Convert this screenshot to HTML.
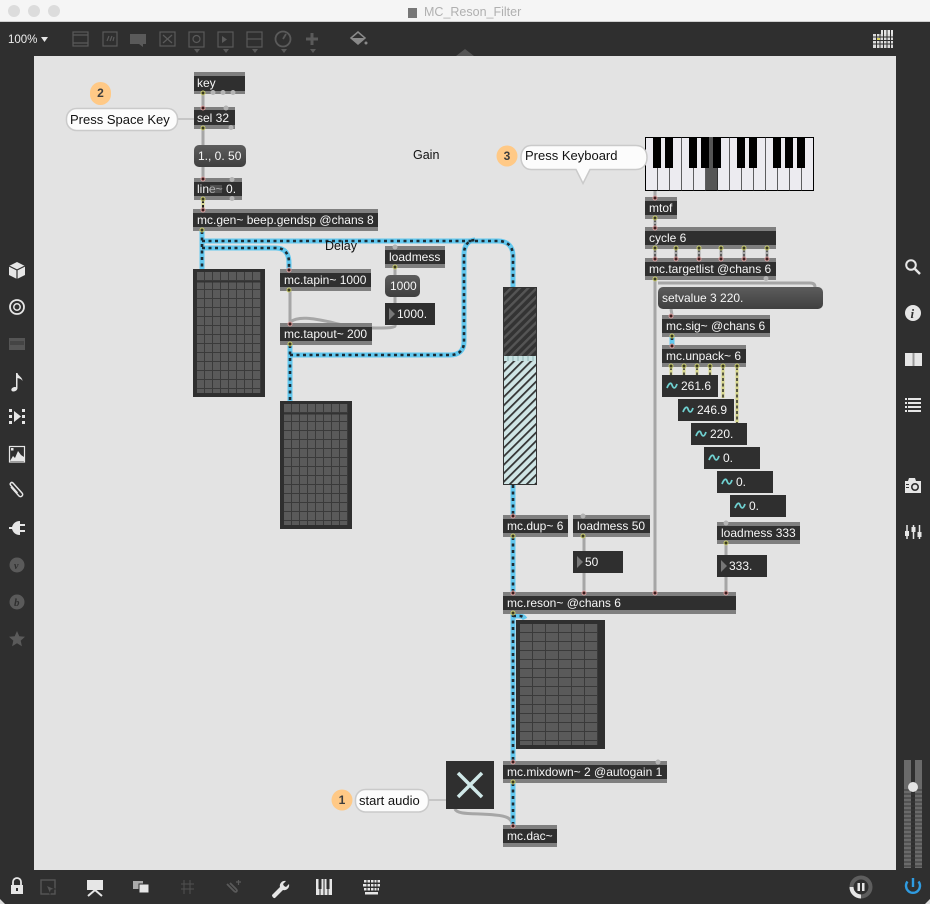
<!DOCTYPE html>
<html><head><meta charset="utf-8"><title>MC_Reson_Filter</title>
<style>
html,body{margin:0;padding:0;background:#2f2f2f;overflow:hidden}
svg{display:block;filter:blur(.3px)}
text{font-family:"Liberation Sans",sans-serif;font-size:12px;fill:#f6f6f6}
.c{font-size:12.5px;fill:#111}
.g{fill:#7f7f7f}.d{fill:#2f2f2f}
.cb{fill:none;stroke:#a6a6a6;stroke-width:3}
.s1{fill:none;stroke:#62c8ef;stroke-width:5}
.s2{fill:none;stroke:#1d2b33;stroke-width:2.600;stroke-dasharray:3 3.500}
.i{fill:#3c1c1c;stroke:#d9a0a0;stroke-width:1}
.o{fill:#3a3a20;stroke:#c9cc70;stroke-width:1}
.ic{fill:#e6e6e6}.il{fill:none;stroke:#e6e6e6;stroke-width:1.500}
.dm{fill:#5a5a5a}.dl{fill:none;stroke:#5a5a5a;stroke-width:1.200}
.w{fill:none;stroke:#6fd0d0;stroke-width:1.800}
.b{fill:#fcfcfc;stroke:#cacaca;stroke-width:1.500}
.n{fill:#ffc986}
.nt{fill:#3d3d3d;font-size:12px;font-weight:bold;text-anchor:middle}
.bp{fill:#b4b4b4}
</style></head><body>
<svg width="930" height="904" viewBox="0 0 930 904" xmlns="http://www.w3.org/2000/svg">
<defs>
<linearGradient id="m" x1="0" y1="0" x2="0" y2="1"><stop offset="0" stop-color="#5c5c5c"/><stop offset="1" stop-color="#3f3f3f"/></linearGradient>
<pattern id="m8" x="197" y="272" width="8" height="9" patternUnits="userSpaceOnUse"><rect width="8" height="9" fill="#3a3a3a"/><rect width="7" height="8" fill="#5a5a5a"/></pattern>
<pattern id="m8b" x="284" y="404" width="8" height="9" patternUnits="userSpaceOnUse"><rect width="8" height="9" fill="#3a3a3a"/><rect width="7" height="8" fill="#5a5a5a"/></pattern>
<pattern id="m6" x="520" y="624" width="13" height="9" patternUnits="userSpaceOnUse"><rect width="13" height="9" fill="#3a3a3a"/><rect width="12" height="8" fill="#5a5a5a"/></pattern>
<pattern id="hd" width="6" height="6" patternUnits="userSpaceOnUse" patternTransform="rotate(45)"><rect width="6" height="6" fill="#333"/><rect width="2.400" height="6" fill="#555"/></pattern>
<pattern id="hl" width="6" height="6" patternUnits="userSpaceOnUse" patternTransform="rotate(45)"><rect width="6" height="6" fill="#cfe5e5"/><rect width="1.800" height="6" fill="#333"/></pattern>
</defs>

<!-- chrome -->
<rect width="930" height="904" fill="#2f2f2f"/>
<rect width="930" height="22" fill="#f5f5f5"/>
<rect y="21" width="930" height="1" fill="#cfcfcf"/>
<circle cx="14" cy="11" r="6" fill="#dcdcdc"/><circle cx="34" cy="11" r="6" fill="#dcdcdc"/><circle cx="54" cy="11" r="6" fill="#dcdcdc"/>
<rect x="408" y="8" width="9" height="10" fill="#777"/>
<text x="424" y="16" style="font-size:12.500px;fill:#b0b0b0">MC_Reson_Filter</text>
<rect x="34" y="56" width="862" height="814" fill="#e3e3e3"/>
<path d="M456 56l9-7 9 7z" fill="#555"/>
<path d="M0 904v-5l5 5zM930 904v-5l-5 5z" fill="#ddd"/>

<!-- top toolbar -->
<text x="8" y="43" style="font-size:11.500px;fill:#eee">100%</text>
<path d="M41 37h7l-3.500 5z" fill="#e6e6e6"/>
<g class="dl">
<rect x="73" y="32" width="15" height="14"/><path d="M73 35h15M73 43h15"/>
<rect x="103" y="32" width="14" height="14"/><path d="M107 41l2-5M110 41l2-5M113 41l1-4"/>
<rect x="160" y="32" width="15" height="14"/><path d="M163 35l9 8M172 35l-9 8"/>
<rect x="189" y="32" width="15" height="15"/><circle cx="196.500" cy="39" r="3.500"/>
<rect x="218" y="32" width="15" height="15"/>
<rect x="247" y="32" width="15" height="15"/><path d="M247 39h15"/>
<circle cx="283" cy="39" r="7.500" stroke-width="1.800"/><path d="M283 39l3-5" stroke-width="1.800"/>
<path d="M312 33v12M306 39h12" stroke-width="3"/>
</g>
<path d="M130 34h16v10h-3v3l-4-3h-9z" class="dm"/>
<path d="M222 36l5 3.500-5 3.500z" class="dm"/>
<path d="M351 38l7-6 7 6-7 6z" fill="none" stroke="#8a8a8a" stroke-width="1.500"/><path d="M352 38h12l-6 6z" fill="#8a8a8a"/><circle cx="366" cy="43" r="1.500" fill="#8a8a8a"/>
<g fill="#5a5a5a"><path d="M194 49h6l-3 4z"/><path d="M223 49h6l-3 4z"/><path d="M252 49h6l-3 4z"/><path d="M281 49h6l-3 4z"/><path d="M310 49h6l-3 4z"/></g>
<g fill="#e4e4e4"><rect x="873" y="34" width="20" height="14" opacity=".95"/><rect x="881" y="30" width="12" height="4"/></g>
<path d="M873 37h20M873 40.500h20M873 44h20M876.500 30v19M880 30v19M883.500 30v19M887 30v19M890.500 30v19" stroke="#2f2f2f" stroke-width="1"/>
<rect x="877" y="38" width="3" height="2" fill="#d8d060"/>

<!-- left sidebar -->
<path d="M17 262l8 4v9l-8 4-8-4v-9z" class="ic"/><path d="M9 266l8 4 8-4M17 270v9" stroke="#2f2f2f" stroke-width="1.200" fill="none"/>
<circle cx="17" cy="307" r="7" fill="none" stroke="#e6e6e6" stroke-width="1.800"/><circle cx="17" cy="307" r="3.200" fill="none" stroke="#e6e6e6" stroke-width="1.500"/>
<rect x="9" y="338" width="16" height="12" fill="#555"/><rect x="10" y="341" width="14" height="4" fill="#444"/>
<path d="M16 373h1.500c.5 3 5 4 5 8-1-2-3-2.500-5-3v10c0 2-2 3.500-4 3.500s-2.500-1.500-2-2.500c.5-1.500 3-2.500 4.500-1.800z" class="ic"/>
<g class="ic"><rect x="9" y="409" width="3" height="3"/><rect x="9" y="415" width="3" height="3"/><rect x="9" y="421" width="3" height="3"/><rect x="22" y="409" width="3" height="3"/><rect x="22" y="415" width="3" height="3"/><rect x="22" y="421" width="3" height="3"/><path d="M14 411l7 5.500-7 5.500z"/></g>
<rect x="9.500" y="446.500" width="15" height="15.500" fill="none" stroke="#e6e6e6" stroke-width="1.200"/>
<path d="M10 461l3-5 2 2 3-7 3 4 3 2v4z" class="ic"/><rect x="11" y="448" width="2.500" height="2.500" class="ic"/>
<path d="M11 487l8 9c2 2 5-1 3-3l-9-10c-1.500-1.500-3.500 .5-2.500 2l7 8" class="il"/>
<path d="M9 527h3c1-3 3-6 8-6v3h5v2h-5v4h5v2h-5v3c-5 0-7-3-8-6h-3z" class="ic"/>
<circle cx="17" cy="565" r="7.500" fill="#5a5a5a"/><text x="14" y="569" style="font:italic bold 10px 'Liberation Serif',serif;fill:#2f2f2f">v</text>
<circle cx="17" cy="602" r="7.500" fill="#5a5a5a"/><text x="14" y="606" style="font:italic bold 11px 'Liberation Serif',serif;fill:#2f2f2f">b</text>
<path d="M17 631l2.300 5.200 5.700.6-4.300 3.800 1.200 5.600-4.900-2.900-4.900 2.900 1.200-5.600-4.300-3.800 5.700-.6z" fill="#5a5a5a"/>

<!-- right sidebar -->
<circle cx="911" cy="265" r="4.800" fill="none" stroke="#e6e6e6" stroke-width="2"/><path d="M915 269l5 5" stroke="#e6e6e6" stroke-width="2.500"/>
<circle cx="913" cy="313" r="8" class="ic"/><text x="910.500" y="318" style="font:italic bold 13px 'Liberation Serif',serif;fill:#2f2f2f">i</text>
<rect x="905" y="353" width="17" height="13" class="ic"/><rect x="912.500" y="353" width="2" height="13" fill="#999"/>
<g class="ic"><rect x="905" y="398" width="2" height="2"/><rect x="905" y="402" width="2" height="2"/><rect x="905" y="406" width="2" height="2"/><rect x="905" y="410" width="2" height="2"/><rect x="908" y="398" width="13" height="2"/><rect x="908" y="402" width="13" height="2"/><rect x="908" y="406" width="13" height="2"/><rect x="908" y="410" width="13" height="2"/></g>
<path d="M905 481h3l1-3h6l1 3h5v12h-16z" class="ic"/><circle cx="915" cy="487" r="3.200" fill="#e6e6e6" stroke="#2f2f2f" stroke-width="1.600"/><rect x="906" y="484" width="3" height="1" fill="#2f2f2f"/><rect x="906" y="487" width="3" height="1" fill="#2f2f2f"/>
<path d="M907 525v14M913.500 525v14M919.500 525v14" stroke="#e6e6e6" stroke-width="1.500"/><rect x="905" y="531" width="4" height="5" class="ic"/><rect x="911.500" y="527" width="4" height="5" class="ic"/><rect x="917.500" y="532" width="4" height="5" class="ic"/>

<!-- bottom bar -->
<path d="M13 885v-3a4 4 0 0 1 8 0v3" fill="none" stroke="#e6e6e6" stroke-width="1.800"/><rect x="11" y="885" width="12" height="9" class="ic"/><rect x="16" y="888" width="2" height="3" fill="#2f2f2f"/>
<rect x="41" y="880" width="14" height="14" fill="none" stroke="#555" stroke-width="1.400"/><path d="M46 885l9 4-4 1-1 4z" fill="#555" stroke="#2f2f2f"/>
<rect x="87" y="880" width="16" height="10" class="ic"/><path d="M95 890l-7 6M95 890l7 6" stroke="#e6e6e6" stroke-width="2"/>
<rect x="133" y="881" width="10" height="8" fill="#aaa"/><rect x="139" y="884" width="10" height="9" class="ic" stroke="#2f2f2f"/>
<path d="M181 884h13M181 889h13M184 880v14M190 880v14" stroke="#505050" stroke-width="1"/>
<path d="M227 884l7 7c2 2 4 0 2-2l-6-6" fill="none" stroke="#5a5a5a" stroke-width="1.800"/><path d="M236 882h5M238.500 880v5" stroke="#5a5a5a" stroke-width="1.200"/>
<path d="M272 895l8-8c-1-3 2-7 6-6l-3 3 1 2 2 1 3-3c1 4-3 7-6 6l-8 8c-1 .5-3-1-3-3z" class="ic"/>
<rect x="316" y="879" width="16" height="16" class="ic"/><path d="M320 879v16M324 879v16M328 879v16" stroke="#2f2f2f" stroke-width="1"/><path d="M320 879v10M328 879v10" stroke="#2f2f2f" stroke-width="3"/>
<g fill="#e6e6e6"><rect x="364" y="880" width="16" height="2.500"/><rect x="363" y="884" width="17" height="2.500"/><rect x="364" y="888" width="15" height="2.500"/><rect x="365" y="892" width="13" height="2.500"/></g>
<path d="M367 880v11M370.500 880v11M374 880v11M377 880v11" stroke="#2f2f2f" stroke-width="1"/>
<circle cx="861" cy="887" r="9.500" fill="none" stroke="#5e5e5e" stroke-width="4"/>
<path d="M851.500 887a9.500 9.500 0 0 0 9.500 9.500" fill="none" stroke="#e6e6e6" stroke-width="4"/>
<rect x="857.500" y="883" width="2.500" height="8" class="ic"/><rect x="862" y="883" width="2.500" height="8" class="ic"/>
<path d="M907.500 881.500a7 7 0 1 0 11 0" fill="none" stroke="#2f9be0" stroke-width="2.400"/><path d="M913 878v9" stroke="#2f9be0" stroke-width="2.400"/>

<!-- meter -->
<rect x="904" y="760" width="7" height="108" fill="#6a6a6a"/><rect x="915" y="760" width="7" height="108" fill="#6a6a6a"/>
<path d="M904 790h18M904 794h18M904 798h18M904 802h18M904 806h18M904 810h18M904 814h18M904 818h18M904 822h18M904 826h18M904 830h18M904 834h18M904 838h18M904 842h18M904 846h18M904 850h18M904 854h18M904 858h18M904 862h18M904 866h18" stroke="#3a3a3a" stroke-width="1"/>
<circle cx="913" cy="787" r="5" fill="#e4e4e4"/>

<!-- grey patch cords -->
<g class="cb">
<path d="M203 94v13M203 129v16M203 167v11M395 268v7M395 297v6"/>
<path d="M290 291v32"/>
<path d="M290 322c8-6 22-4 40 0 14 4 30 6 46 6 12 0 20 0 19-3"/>
<path d="M655 280v312M658 283h152c4 0 5 2 5 4"/>
<path d="M671 309l1 6M584 537l0 14M584 573v19M726 544v48"/>
<path d="M455 809c2 6 20 4 40 6 12 1 16 3 18 10"/>
<path d="M655 191v6M655 219v8M655 249v9M676 249v9M699 249v9M721 249v9M744 249v9M767 249v9"/>
<path d="M203 200v9" stroke="#d6d68a"/>
</g>
<path d="M177 119h17M429 800h17" stroke="#bdbdbd" stroke-width="1.500"/>
<path d="M203 200v9" stroke="#222" stroke-width="2" stroke-dasharray="3 2"/>
<path d="M655 219v8M655 249v9M676 249v9M699 249v9M721 249v9M744 249v9M767 249v9" stroke="#444" stroke-width="1.500" stroke-dasharray="3 2"/>
<path d="M671 367v8M684 367v8M697 367v8M710 367v8M723 367v31M737 367v56" stroke="#d6d68a" stroke-width="3" fill="none"/>
<path d="M671 367v8M684 367v8M697 367v8M710 367v8M723 367v31M737 367v56" stroke="#2a2a2a" stroke-width="1.500" stroke-dasharray="3 2.500" fill="none"/>

<!-- signal cords -->
<path class="s1" d="M202 231v38M202 241h296c10 0 15 6 15 15v31M202 248h74c9 0 13 6 13 15v6M290 345v56M290 355h160c9 0 14-5 14-13v-88c0-8 4-14 11-14M513 485v30M513 537v55M513 614v147M513 616h6c3 0 5 1 6 3M513 783v42M672 337v8"/>
<path class="s2" d="M202 231v38M202 241h296c10 0 15 6 15 15v31M202 248h74c9 0 13 6 13 15v6M290 345v56M290 355h160c9 0 14-5 14-13v-88c0-8 4-14 11-14M513 485v30M513 537v55M513 614v147M513 616h6c3 0 5 1 6 3M513 783v42M672 337v8"/>

<!-- matrices -->
<rect x="193" y="269" width="72" height="128" class="d"/><rect x="197" y="272" width="64" height="121" fill="url(#m8)"/><rect x="197" y="281" width="64" height="1.500" fill="#333"/>
<rect x="280" y="401" width="72" height="128" class="d"/><rect x="284" y="404" width="64" height="121" fill="url(#m8b)"/><rect x="284" y="413" width="64" height="1.500" fill="#333"/>
<rect x="516" y="620" width="89" height="129" class="d"/><rect x="520" y="624" width="78" height="121" fill="url(#m6)"/>

<!-- slider -->
<rect x="503" y="287" width="34" height="198" fill="#333"/>
<rect x="504" y="288" width="32" height="68" fill="url(#hd)"/>
<rect x="504" y="356" width="32" height="5" fill="#c8e2e2"/>
<path d="M508 356v5M513 356v5M518 356v5M523 356v5M528 356v5M533 356v5" stroke="#8aa" stroke-width=".8"/>
<rect x="504" y="361" width="32" height="123" fill="url(#hl)"/>

<!-- piano -->
<rect x="645.500" y="137.500" width="168" height="53" fill="#ecebf0" stroke="#000"/>
<rect x="706" y="168" width="12" height="22" fill="#555"/><rect x="709" y="138" width="4" height="30" fill="#555"/>
<path d="M657.500 137v54M669.500 137v54M681.500 137v54M693.500 137v54M705.500 137v54M717.500 137v54M729.500 137v54M741.500 137v54M753.500 137v54M765.500 137v54M777.500 137v54M789.500 137v54M801.500 137v54" stroke="#222" stroke-width="1" opacity=".7"/>
<g fill="#000"><rect x="653" y="137" width="8" height="31"/><rect x="665" y="137" width="8" height="31"/><rect x="689" y="137" width="8" height="31"/><rect x="701" y="137" width="8" height="31"/><rect x="713" y="137" width="8" height="31"/><rect x="737" y="137" width="8" height="31"/><rect x="749" y="137" width="8" height="31"/><rect x="773" y="137" width="8" height="31"/><rect x="785" y="137" width="8" height="31"/><rect x="797" y="137" width="8" height="31"/></g>
<rect x="709" y="137" width="4" height="31" fill="#555"/>

<!-- objects -->
<g>
<rect class="g" x="194" y="72" width="51" height="22"/><rect class="d" x="194" y="76" width="51" height="15"/><text x="197" y="87">key</text>
<rect class="g" x="194" y="107" width="41" height="22"/><rect class="d" x="194" y="110" width="41" height="15"/><text x="197" y="122">sel 32</text>
<rect class="g" x="194" y="178" width="48" height="22"/><rect class="d" x="194" y="182" width="48" height="14"/><text x="197" y="193">line~ 0.</text><rect x="210" y="185" width="12" height="8" fill="#6a6a6a" opacity=".55"/>
<rect class="g" x="193" y="209" width="185" height="22"/><rect class="d" x="193" y="213" width="185" height="14"/><text x="197" y="224">mc.gen~ beep.gendsp @chans 8</text>
<rect class="g" x="280" y="269" width="91" height="22"/><rect class="d" x="280" y="273" width="91" height="14"/><text x="284" y="284">mc.tapin~ 1000</text>
<rect class="g" x="280" y="323" width="92" height="22"/><rect class="d" x="280" y="327" width="92" height="14"/><text x="284" y="338">mc.tapout~ 200</text>
<rect class="g" x="385" y="246" width="60" height="22"/><rect class="d" x="385" y="250" width="60" height="14"/><text x="389" y="261">loadmess</text>
<rect class="g" x="645" y="197" width="32" height="22"/><rect class="d" x="645" y="201" width="32" height="14"/><text x="649" y="212">mtof</text>
<rect class="g" x="645" y="227" width="131" height="22"/><rect class="d" x="645" y="231" width="131" height="14"/><text x="649" y="242">cycle 6</text>
<rect class="g" x="645" y="258" width="131" height="22"/><rect class="d" x="645" y="262" width="131" height="14"/><text x="649" y="273">mc.targetlist @chans 6</text>
<rect class="g" x="662" y="315" width="108" height="22"/><rect class="d" x="662" y="319" width="108" height="14"/><text x="666" y="330">mc.sig~ @chans 6</text>
<rect class="g" x="662" y="345" width="84" height="22"/><rect class="d" x="662" y="349" width="84" height="14"/><text x="666" y="360">mc.unpack~ 6</text>
<rect class="g" x="717" y="522" width="83" height="22"/><rect class="d" x="717" y="526" width="83" height="14"/><text x="721" y="537">loadmess 333</text>
<rect class="g" x="503" y="515" width="65" height="22"/><rect class="d" x="503" y="519" width="65" height="14"/><text x="507" y="530">mc.dup~ 6</text>
<rect class="g" x="573" y="515" width="77" height="22"/><rect class="d" x="573" y="519" width="77" height="14"/><text x="577" y="530">loadmess 50</text>
<rect class="g" x="503" y="592" width="233" height="22"/><rect class="d" x="503" y="596" width="233" height="14"/><text x="507" y="607">mc.reson~ @chans 6</text>
<rect class="g" x="503" y="761" width="164" height="22"/><rect class="d" x="503" y="765" width="164" height="14"/><text x="507" y="776">mc.mixdown~ 2 @autogain 1</text>
<rect class="g" x="503" y="825" width="54" height="22"/><rect class="d" x="503" y="829" width="54" height="14"/><text x="507" y="840">mc.dac~</text>
</g>
<!-- pale object bumps -->
<g class="bp"><circle cx="213" cy="92.500" r="2.500"/><circle cx="223" cy="92.500" r="2.500"/><circle cx="233" cy="92.500" r="2.500"/><circle cx="226" cy="108" r="2.500"/><circle cx="231" cy="127.500" r="2.500"/><circle cx="232" cy="179.500" r="2.500"/><circle cx="232" cy="198.500" r="2.500"/><circle cx="395" cy="247" r="2.500"/><circle cx="766" cy="278.500" r="2.500"/><circle cx="583" cy="516" r="2.500"/><circle cx="726" cy="523" r="2.500"/><circle cx="658" cy="762" r="2.500"/></g>
<!-- messages -->
<rect x="194" y="145" width="52" height="22" rx="5" fill="url(#m)"/><text x="198" y="160">1., 0. 50</text>
<rect x="385" y="275" width="35" height="22" rx="5" fill="url(#m)"/><text x="390" y="290">1000</text>
<rect x="658" y="287" width="165" height="22" rx="5" fill="url(#m)"/><text x="662" y="302">setvalue 3 220.</text>
<!-- numbers -->
<rect class="d" x="385" y="303" width="50" height="22"/><path d="M389 308l6 6-6 6z" fill="#777"/><text x="397" y="318">1000.</text>
<rect class="d" x="717" y="555" width="50" height="22"/><path d="M721 560l6 6-6 6z" fill="#777"/><text x="729" y="570">333.</text>
<rect class="d" x="573" y="551" width="50" height="22"/><path d="M577 556l6 6-6 6z" fill="#777"/><text x="585" y="566">50</text>
<!-- number~ -->
<rect class="d" x="662" y="375" width="56" height="22"/><path class="w" d="M667 388c2-5 4-6 5-3s3 5 5-1"/><text x="681" y="390">261.6</text>
<rect class="d" x="678" y="399" width="56" height="22"/><path class="w" d="M683 412c2-5 4-6 5-3s3 5 5-1"/><text x="697" y="414">246.9</text>
<rect class="d" x="691" y="423" width="56" height="22"/><path class="w" d="M696 436c2-5 4-6 5-3s3 5 5-1"/><text x="710" y="438">220.</text>
<rect class="d" x="704" y="447" width="56" height="22"/><path class="w" d="M709 460c2-5 4-6 5-3s3 5 5-1"/><text x="723" y="462">0.</text>
<rect class="d" x="717" y="471" width="56" height="22"/><path class="w" d="M722 484c2-5 4-6 5-3s3 5 5-1"/><text x="736" y="486">0.</text>
<rect class="d" x="730" y="495" width="56" height="22"/><path class="w" d="M735 508c2-5 4-6 5-3s3 5 5-1"/><text x="749" y="510">0.</text>
<!-- toggle -->
<rect class="d" x="446" y="761" width="48" height="48"/><path d="M458 773l24 24M482 773l-24 24" stroke="#cfe8e8" stroke-width="3.500"/>

<!-- ports -->
<g class="i"><circle cx="203" cy="108" r="2"/><circle cx="203" cy="179" r="2"/><circle cx="203" cy="210" r="2"/><circle cx="289" cy="270" r="2"/><circle cx="290" cy="324" r="2"/><circle cx="655" cy="198" r="2"/><circle cx="655" cy="228" r="2"/><circle cx="655" cy="259" r="2"/><circle cx="676" cy="259" r="2"/><circle cx="699" cy="259" r="2"/><circle cx="721" cy="259" r="2"/><circle cx="744" cy="259" r="2"/><circle cx="767" cy="259" r="2"/><circle cx="671" cy="316" r="2"/><circle cx="672" cy="346" r="2"/><circle cx="513" cy="516" r="2"/><circle cx="513" cy="593" r="2"/><circle cx="584" cy="593" r="2"/><circle cx="655" cy="593" r="2"/><circle cx="726" cy="593" r="2"/><circle cx="513" cy="762" r="2"/><circle cx="513" cy="826" r="2"/></g>
<g class="o"><circle cx="203" cy="93" r="2"/><circle cx="203" cy="128" r="2"/><circle cx="203" cy="199" r="2"/><circle cx="202" cy="230" r="2"/><circle cx="289" cy="290" r="2"/><circle cx="290" cy="344" r="2"/><circle cx="395" cy="267" r="2"/><circle cx="655" cy="218" r="2"/><circle cx="655" cy="248" r="2"/><circle cx="676" cy="248" r="2"/><circle cx="699" cy="248" r="2"/><circle cx="721" cy="248" r="2"/><circle cx="744" cy="248" r="2"/><circle cx="767" cy="248" r="2"/><circle cx="655" cy="279" r="2"/><circle cx="672" cy="336" r="2"/><circle cx="671" cy="366" r="2"/><circle cx="684" cy="366" r="2"/><circle cx="697" cy="366" r="2"/><circle cx="710" cy="366" r="2"/><circle cx="723" cy="366" r="2"/><circle cx="737" cy="366" r="2"/><circle cx="513" cy="536" r="2"/><circle cx="583" cy="536" r="2"/><circle cx="726" cy="543" r="2"/><circle cx="513" cy="613" r="2"/><circle cx="513" cy="782" r="2"/></g>

<!-- comments -->
<rect class="b" x="66.500" y="108.500" width="111" height="22" rx="10"/><text x="70" y="124" class="c" style="font-size:13px">Press Space Key</text>
<path class="b" d="M531 145.500h105c7 0 11 5 11 12s-4 12-11 12h-46l-7 14-7-14h-45c-6 0-10-5-10-12s4-12 10-12z"/><text x="525" y="160" class="c" style="font-size:13px">Press Keyboard</text>
<rect class="b" x="355.500" y="789.500" width="73" height="22.500" rx="10"/><text x="359" y="805" class="c" style="font-size:13px">start audio</text>
<text x="413" y="159" class="c">Gain</text>
<text x="325" y="250" class="c">Delay</text>
<rect class="n" x="90" y="82" width="21" height="23" rx="10.500"/><text class="nt" x="100.500" y="97">2</text>
<circle class="n" cx="507" cy="156" r="10.500"/><text class="nt" x="507" y="160">3</text>
<circle class="n" cx="342" cy="800" r="10.500"/><text class="nt" x="342" y="804">1</text>
</svg>
</body></html>
